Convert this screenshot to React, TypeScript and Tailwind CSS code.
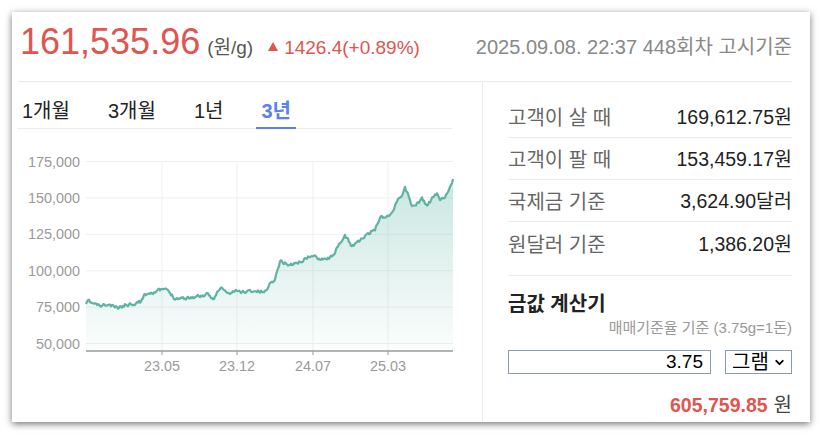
import React from "react";
import { ChevronDown } from "lucide-react";

const FONT = '"Liberation Sans", Arial, "Noto Sans CJK KR", sans-serif';

// chart anchor points, in page pixels (x, y)
const anchors: [number, number][] = [
  [86, 305], [88, 302], [92, 304], [100, 307], [108, 306], [118, 309], [125, 306],
  [140, 303], [145, 295], [152, 293], [158, 292], [165, 290], [170, 294], [175, 299],
  [187, 299], [200, 297], [207, 296], [213, 300], [218, 292], [222, 289], [228, 295],
  [235, 292], [240, 293], [250, 292], [265, 293], [268, 287], [275, 280], [280, 262],
  [290, 266], [300, 263], [310, 257], [320, 259], [330, 259], [337, 250], [345, 237],
  [352, 247], [360, 241], [368, 236], [375, 230], [380, 218], [388, 217], [393, 212],
  [397, 202], [402, 196], [405, 188], [408, 196], [412, 207], [418, 204], [422, 200],
  [427, 207], [432, 200], [437, 195], [440, 200], [445, 197], [448, 195], [451, 188],
  [453, 180],
];

function buildLine() {
  let seed = 11;
  const rnd = () => {
    seed = (seed * 16807) % 2147483647;
    return seed / 2147483647;
  };
  const pts: [number, number][] = [];
  let drift = 0;
  let i = 0;
  for (let x = 86; x <= 453; x += 1) {
    while (i < anchors.length - 2 && anchors[i + 1][0] < x) i++;
    const [x0, y0] = anchors[i];
    const [x1, y1] = anchors[i + 1];
    const t = x1 === x0 ? 0 : (x - x0) / (x1 - x0);
    const base = y0 + (y1 - y0) * t;
    drift = drift * 0.45 + (rnd() - 0.5) * 3;
    const y = x === 86 || x === 453 ? base : base + drift;
    pts.push([x - 18, y - 130]);
  }
  return pts;
}

const line = buildLine();
const linePath = line.map(([x, y], k) => `${k ? "L" : "M"}${x.toFixed(1)},${y.toFixed(1)}`).join(" ");
const areaPath = `${linePath} L${line[line.length - 1][0]},222 L${line[0][0]},222 Z`;

const yLabels = ["175,000", "150,000", "125,000", "100,000", "75,000", "50,000"];
const xTicks = [
  { x: 144, label: "23.05" },
  { x: 219, label: "23.12" },
  { x: 295, label: "24.07" },
  { x: 370, label: "25.03" },
];

const Chart = () => (
  <svg width={465} height={250} className="block">
    <defs>
      <linearGradient id="goldArea" x1="0" y1="0" x2="0" y2="1">
        <stop offset="0%" stopColor="#62b6a6" stopOpacity={0.34} />
        <stop offset="100%" stopColor="#62b6a6" stopOpacity={0.02} />
      </linearGradient>
    </defs>
    {yLabels.map((label, k) => {
      const y = 32.5 + k * 36.4;
      return (
        <g key={label}>
          <line x1={68} x2={435} y1={y} y2={y} stroke="#efefef" strokeWidth={1} />
          <text x={62} y={y} textAnchor="end" dominantBaseline="central" fontSize={14.4} fill="#9a9a9a" fontFamily={FONT}>
            {label}
          </text>
        </g>
      );
    })}
    {xTicks.map((t) => (
      <g key={t.label}>
        <line x1={t.x} x2={t.x} y1={32} y2={222} stroke="#efefef" strokeWidth={1} />
        <line x1={t.x} x2={t.x} y1={222} y2={226} stroke="#999" strokeWidth={1} />
        <text x={t.x} y={237} textAnchor="middle" dominantBaseline="central" fontSize={14.4} fill="#9a9a9a" fontFamily={FONT}>
          {t.label}
        </text>
      </g>
    ))}
    <path d={areaPath} fill="url(#goldArea)" />
    <path d={linePath} fill="none" stroke="#5fb3a2" strokeWidth={2.2} strokeLinejoin="round" />
    <line x1={68} x2={435} y1={222} y2={222} stroke="#9a9a9a" strokeWidth={1.5} />
  </svg>
);

const rows = [
  { label: "고객이 살 때", value: "169,612.75원" },
  { label: "고객이 팔 때", value: "153,459.17원" },
  { label: "국제금 기준", value: "3,624.90달러" },
  { label: "원달러 기준", value: "1,386.20원" },
];

const tabs = ["1개월", "3개월", "1년", "3년"];

export default function App() {
  return (
    <div className="min-h-screen bg-white p-[12px]" style={{ fontFamily: FONT }}>
      <div className="flex h-[410px] w-[798px] flex-col bg-white pl-[6px] pr-[18px] shadow-[0_2px_7px_rgba(0,0,0,0.55)]">
        {/* header */}
        <div className="flex h-[70px] shrink-0 items-baseline justify-between border-b border-[#ebebeb] pl-[2px] pt-[12px]">
          <div className="flex items-baseline">
            <span className="text-[36px] leading-[36px] text-[#e2544e]">161,535.96</span>
            <span className="ml-[7px] text-[19px] text-[#555]">(원/g)</span>
            <span className="ml-[15px] mr-[6px] inline-block h-0 w-0 -translate-y-[3px] border-x-[5px] border-b-[9px] border-x-transparent border-b-[#e2544e]" />
            <span className="text-[19px] text-[#e2544e]">1426.4(+0.89%)</span>
          </div>
          <span className="text-[20px] text-[#888]">2025.09.08. 22:37 448회차 고시기준</span>
        </div>

        {/* body */}
        <div className="flex flex-1">
          <div className="w-[465px] shrink-0 border-r border-[#ebebeb]">
            <div className="-ml-px flex h-[47px] w-[435px] items-stretch gap-[28px] border-b border-[#ebebeb]">
              {tabs.map((t) => {
                const active = t === "3년";
                return (
                  <div
                    key={t}
                    className={
                      active
                        ? "-mb-px flex items-center border-b-2 border-[#5a80f2] px-[5px] pt-[12px] text-[20px] font-bold text-[#5a80f2]"
                        : "-mb-px flex items-center border-b-2 border-transparent px-[5px] pt-[12px] text-[20px] text-[#222]"
                    }
                  >
                    {t}
                  </div>
                );
              })}
            </div>
            <Chart />
          </div>

          <div className="flex flex-1 flex-col pl-[25px] pt-[14px]">
            <div className="border-b border-[#ebebeb] pb-[11px]">
              {rows.map((r, k) => (
                <div
                  key={r.label}
                  className={
                    k < 3
                      ? "flex h-[42px] items-center justify-between border-b border-[#ebebeb] pt-[3px]"
                      : "flex h-[42px] items-center justify-between pt-[3px]"
                  }
                >
                  <span className="text-[20px] text-[#666]">{r.label}</span>
                  <span className="text-[19.5px] text-[#222]">{r.value}</span>
                </div>
              ))}
            </div>

            <div className="mt-[16px] text-[20px] font-bold leading-[24px] text-[#222]">금값 계산기</div>
            <div className="mt-[3px] text-right text-[15px] leading-[18px] text-[#999]">매매기준율 기준 (3.75g=1돈)</div>
            <div className="mt-[13px] flex h-[24px] items-stretch justify-between">
              <div className="flex w-[203px] items-center justify-end border border-[#8a9bb0] pr-[7px] text-[19px] text-black">
                3.75
              </div>
              <div className="flex w-[67px] items-center justify-between border border-[#8a9bb0] pl-[6px] pr-[5px] text-[20px] text-black">
                <span>그램</span>
                <ChevronDown className="h-[13px] w-[13px]" strokeWidth={3.5} />
              </div>
            </div>
            <div className="mt-[19px] flex items-baseline justify-end leading-[24px]">
              <span className="text-[19.5px] font-bold text-[#e2544e]">605,759.85</span>
              <span className="ml-[6px] text-[20px] text-[#444]">원</span>
            </div>
          </div>
        </div>
      </div>
    </div>
  );
}
